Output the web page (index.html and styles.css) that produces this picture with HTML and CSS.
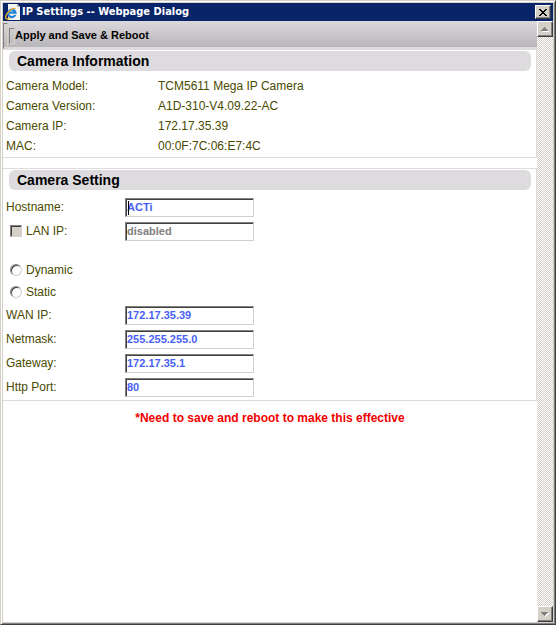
FILE: index.html
```html
<!DOCTYPE html>
<html lang="en">
<head>
    <meta charset="UTF-8">
    <meta name="viewport" content="width=device-width, initial-scale=1.0">
    <title>IP Settings</title>
    <link rel="stylesheet" href="styles.css">
</head>
<body>
    <div class="window">
        <header class="title-bar">
            <svg class="title-icon" width="16" height="16" viewBox="0 0 16 16" aria-hidden="true">
                <path d="M3 0h9l3 3v13H3z" fill="#f4f4f0"/>
                <path d="M12 0v3h3z" fill="#b8b8b4"/>
                <path d="M10.300 10.800A3.700 3.700 0 1 1 10.500 8.600H4" fill="none" stroke="#1e82dc" stroke-width="2.200"/>
                <path d="M1 14.500C-1 11 7 3.500 10.500 4.500M1 14.500C2 15.300 4 14.500 5 13.500" fill="none" stroke="#f0ae24" stroke-width="1.300"/>
            </svg>
            <h1 class="title-text">IP Settings -- Webpage Dialog</h1>
            <button class="close-btn" type="button" aria-label="Close">
                <svg width="8" height="7" viewBox="0 0 8 7" shape-rendering="crispEdges">
                    <path d="M0 0h2v1h1v1h2v-1h1v-1h2v1h-1v1h-1v1h-1v1h1v1h1v1h1v1h-2v-1h-1v-1h-2v1h-1v1h-2v-1h1v-1h1v-1h1v-1h-1v-1h-1v-1h-1z" fill="#000"/>
                </svg>
            </button>
        </header>

        <div class="body">
            <main class="content">
                <div class="toolbar">
                    <span class="rail"></span>
                    <span class="grip"></span>
                    <button class="apply-btn" type="button">Apply and Save &amp; Reboot</button>
                </div>

                <section class="panel">
                    <h2 class="panel-title">Camera Information</h2>
                    <dl class="info">
                        <dt>Camera Model:</dt>
                        <dd>TCM5611 Mega IP Camera</dd>
                        <dt>Camera Version:</dt>
                        <dd>A1D-310-V4.09.22-AC</dd>
                        <dt>Camera IP:</dt>
                        <dd>172.17.35.39</dd>
                        <dt>MAC:</dt>
                        <dd>00:0F:7C:06:E7:4C</dd>
                    </dl>
                </section>

                <form class="panel settings">
                    <h2 class="panel-title">Camera Setting</h2>
                    <div class="row">
                        <label for="hostname">Hostname:</label>
                        <span class="field focused"><input class="text" id="hostname" type="text" value="ACTi"></span>
                    </div>
                    <div class="row">
                        <label class="option"><input class="check" type="checkbox" disabled>LAN IP:</label>
                        <input class="text" type="text" value="disabled" aria-label="LAN IP address" disabled>
                    </div>
                    <div class="modes">
                        <label class="option"><input class="radio" type="radio" name="mode">Dynamic</label>
                        <label class="option"><input class="radio" type="radio" name="mode">Static</label>
                    </div>
                    <div class="row">
                        <label for="wan">WAN IP:</label>
                        <input class="text" id="wan" type="text" value="172.17.35.39">
                    </div>
                    <div class="row">
                        <label for="netmask">Netmask:</label>
                        <input class="text" id="netmask" type="text" value="255.255.255.0">
                    </div>
                    <div class="row">
                        <label for="gateway">Gateway:</label>
                        <input class="text" id="gateway" type="text" value="172.17.35.1">
                    </div>
                    <div class="row">
                        <label for="port">Http Port:</label>
                        <input class="text" id="port" type="text" value="80">
                    </div>
                </form>

                <p class="notice">*Need to save and reboot to make this effective</p>
            </main>

            <div class="scrollbar">
                <button class="scroll-btn" type="button" aria-label="Scroll up" disabled>
                    <svg width="8" height="5" viewBox="0 0 8 5" shape-rendering="crispEdges">
                        <path d="M1 4h7v1H1z" fill="#fff"/>
                        <path d="M3 0h1v1h1v1h1v1h1v1H0v-1h1v-1h1v-1h1z" fill="#808080"/>
                    </svg>
                </button>
                <button class="scroll-btn" type="button" aria-label="Scroll down" disabled>
                    <svg width="8" height="5" viewBox="0 0 8 5" shape-rendering="crispEdges">
                        <path d="M7 1h1v1H7v1H6v1H5v1H4V3h1V2h1V1z" fill="#fff"/>
                        <path d="M0 0h7v1h-1v1h-1v1h-1v1h-1v-1h-1v-1h-1v-1h-1z" fill="#808080"/>
                    </svg>
                </button>
            </div>
        </div>
    </div>
</body>
</html>
```

FILE: styles.css
```css
* {
    margin: 0;
    padding: 0;
    box-sizing: border-box;
}

body {
    font-family: "Liberation Sans", Arial, sans-serif;
    font-size: 12px;
    color: #4a4a00;
    background-color: #d4d0c8;
}

button {
    font: inherit;
}

/* Window frame */
.window {
    display: flex;
    flex-direction: column;
    min-height: 100vh;
    padding: 2px;
    border: 1px solid;
    border-color: #d4d0c8 #404040 #404040 #d4d0c8;
    box-shadow: inset 1px 1px #fff, inset -1px -1px #808080;
}

.title-bar {
    display: flex;
    align-items: center;
    height: 18px;
    padding: 0 2px;
    background-color: #0a246a;
}

.title-icon {
    margin-right: 1px;
}

.title-text {
    flex: 1;
    color: #fff;
    font-family: "DejaVu Sans Condensed", "DejaVu Sans", sans-serif;
    font-size: 11px;
    font-weight: bold;
    line-height: 18px;
}

.close-btn,
.scroll-btn {
    display: flex;
    align-items: center;
    justify-content: center;
    width: 16px;
    height: 14px;
    background-color: #d4d0c8;
    border: 1px solid;
    border-color: #fff #404040 #404040 #fff;
    box-shadow: inset -1px -1px #808080;
}

.body {
    display: flex;
    flex: 1;
}

.content {
    flex: 1;
    background-color: #fff;
}

/* Toolbar */
.toolbar {
    display: flex;
    align-items: center;
    height: 29px;
    background: linear-gradient(#dad8da, #b8b6b8 26px, #dddbde 26px);
}

.rail,
.grip {
    border: 1px solid;
    border-color: #808080 #d4d0c8 #d4d0c8 #808080;
}

.rail {
    width: 5px;
    height: 26px;
}

.grip {
    width: 6px;
    height: 16px;
    margin-left: 1px;
}

.apply-btn {
    color: #000;
    background: none;
    border: none;
    font-size: 11px;
    font-weight: bold;
    line-height: 14px;
    padding-bottom: 1px;
}

/* Panels */
.panel {
    padding: 1px 5px 0 2px;
    border: 1px solid #dddbde;
    border-top: none;
    border-left: none;
}

.panel-title {
    height: 20px;
    margin-left: 4px;
    padding-left: 8px;
    color: #000;
    background-color: #dddbde;
    border-radius: 6px;
    font-size: 14px;
    line-height: 21px;
}

.info {
    display: grid;
    grid-template-columns: 152px 1fr;
    padding: 5px 0 1px 1px;
    line-height: 20px;
}

.settings {
    margin-top: 10px;
    padding-bottom: 1px;
    border-top: 1px solid #dddbde;
}

.settings .panel-title {
    margin-bottom: 5px;
}

.row {
    display: grid;
    grid-template-columns: 119px 129px;
    align-items: center;
    height: 24px;
    padding-left: 1px;
}

.text {
    display: block;
    width: 100%;
    height: 19px;
    padding: 0 1px;
    color: #4862f5;
    background-color: #fff;
    border: 1px solid;
    border-color: #808080 #d4d0c8 #d4d0c8 #808080;
    box-shadow: inset 1px 1px #404040;
    font-family: inherit;
    font-size: 11px;
    font-weight: bold;
}

.text:disabled {
    color: #808080;
}

.field {
    position: relative;
}

/* Text cursor */
.focused::before {
    content: "";
    position: absolute;
    top: 3px;
    left: 3px;
    width: 1px;
    height: 14px;
    background-color: #000;
}

.option {
    display: flex;
    align-items: center;
    gap: 4px;
    height: 22px;
    padding-left: 4px;
}

.check,
.radio {
    appearance: none;
    width: 12px;
    height: 12px;
    border: 1px solid;
    border-color: #808080 #d4d0c8 #d4d0c8 #808080;
    box-shadow: inset 1px 1px #404040;
}

.check {
    background-color: #d4d0c8;
}

.radio {
    border-radius: 50%;
}

.modes {
    padding: 16px 0 0 1px;
}

.notice {
    margin-top: 9px;
    color: #f00000;
    font-size: 12px;
    font-weight: bold;
    line-height: 16px;
    text-align: center;
}

/* Scrollbar */
.scrollbar {
    display: flex;
    flex-direction: column;
    justify-content: space-between;
    width: 16px;
    background: repeating-conic-gradient(#d4d0c8 0 25%, #fff 0 50%) 0 0 / 2px 2px;
}

.scroll-btn {
    height: 16px;
}
```
